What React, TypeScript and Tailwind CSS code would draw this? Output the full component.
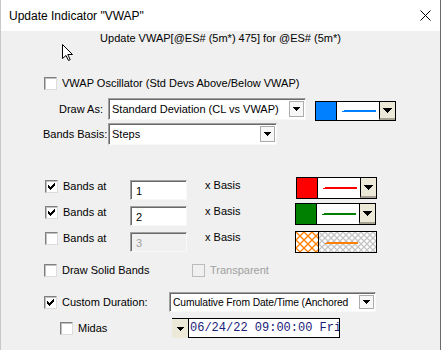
import React from "react";

const Tri = ({ w = 7, h = 4 }: { w?: number; h?: number }) => (
  <svg width={w} height={h} viewBox={`0 0 ${w} ${h}`} shapeRendering="crispEdges">
    <polygon points={`0,0 ${w},0 ${w / 2},${h}`} fill="#000" />
  </svg>
);

const CheckBox = ({ checked = false, disabled = false }: { checked?: boolean; disabled?: boolean }) => (
  <div
    className={
      disabled
        ? "w-[13px] h-[13px] shrink-0 border border-[#bcbcbc] bg-[#f0f0f0]"
        : "w-[13px] h-[13px] shrink-0 border border-t-[#808080] border-l-[#808080] border-b-[#dcdcdc] border-r-[#dcdcdc] bg-white shadow-[inset_1px_1px_0_#c0c0c0] flex items-center justify-center"
    }
  >
    {checked && (
      <svg width="7" height="7" viewBox="0 0 7 7" shapeRendering="crispEdges">
        <path d="M6 0h1v3h-1v1h-1v1h-1v1h-1v1h-1v-1h-1v-1h-1v-3h1v1h1v1h1v-1h1v-1h1z" fill="#000" />
      </svg>
    )}
  </div>
);

const DropBtn = () => (
  <div className="w-[15px] h-full shrink-0 bg-[#f7f7f7] border border-[#acacac] flex items-center justify-center">
    <Tri />
  </div>
);

const Combo = ({ text, className, textClass = "" }: { text: string; className: string; textClass?: string }) => (
  <div
    className={
      "flex items-stretch bg-white border border-t-[#a0a0a0] border-l-[#a0a0a0] border-b-[#f8f8f8] border-r-[#f8f8f8] shadow-[inset_1px_1px_0_#696969] pl-[3px] pr-[1px] py-[2px] " +
      className
    }
  >
    <div className={"flex-1 overflow-hidden whitespace-nowrap leading-[16px] " + textClass}>{text}</div>
    <DropBtn />
  </div>
);

const ColorCombo = ({ color, line, className }: { color: string; line: string; className: string }) => (
  <div className={"flex border border-black bg-white " + className}>
    <div className="w-[22px] h-full border-r border-black" style={{ background: color }} />
    <div className="flex-1 flex items-center pl-[5px] pr-[3px]">
      <svg width="34" height="3" viewBox="0 0 34 3" shapeRendering="crispEdges">
        <rect x="2" y="0" width="32" height="2" fill={line} />
        <rect x="0" y="1" width="2" height="1" fill={line} />
      </svg>
    </div>
    <div className="w-[16px] h-full border-l border-black bg-[#ece9d8] flex items-center justify-center border-b-2 border-b-[#a5a294] pt-[1px]">
      <Tri w={9} h={5} />
    </div>
  </div>
);

const HatchCombo = ({ className }: { className: string }) => (
  <div className={"flex border border-black bg-white " + className}>
    <svg width="22" height="20" className="border-r border-black shrink-0 w-[23px] h-full">
      <defs>
        <pattern id="oh" width="8" height="8" patternUnits="userSpaceOnUse">
          <rect width="8" height="8" fill="#fff" />
          <path d="M0 0L8 8M8 0L0 8" stroke="#ff8000" strokeWidth="1.3" />
        </pattern>
      </defs>
      <rect width="23" height="21" fill="url(#oh)" />
    </svg>
    <div className="flex-1 relative">
      <svg className="absolute inset-0" width="100%" height="100%">
        <defs>
          <pattern id="gh" width="6" height="6" patternUnits="userSpaceOnUse">
            <rect width="6" height="6" fill="#fff" />
            <path d="M0 0L6 6M6 0L0 6" stroke="#c4c4c4" strokeWidth="1.3" />
          </pattern>
        </defs>
        <rect width="100%" height="100%" fill="url(#gh)" />
        <rect x="8" y="10" width="31" height="2" fill="#ff8000" />
        <rect x="6" y="11" width="2" height="1" fill="#ff8000" />
      </svg>
    </div>
  </div>
);

const Sunken = ({ text, disabled = false }: { text: string; disabled?: boolean }) => (
  <div
    className={
      (disabled ? "bg-[#f0f0f0] text-[#a0a0a0] " : "bg-white ") +
      "w-[57px] h-[20px] border border-t-[#a0a0a0] border-l-[#a0a0a0] border-b-[#f8f8f8] border-r-[#f8f8f8] shadow-[inset_1px_1px_0_#696969] pl-[5px] leading-[19px] pt-[1px]"
    }
  >
    {text}
  </div>
);

const BandRow = ({ n, checked, disabled, mt, children }: { n: string; checked: boolean; disabled?: boolean; mt: string; children: React.ReactNode }) => (
  <div className={"h-[22px] flex items-start pl-[44px] " + mt}>
    <CheckBox checked={checked} />
    <span className="ml-[5px] w-[67px] leading-[13px]">Bands at</span>
    <Sunken text={n} disabled={disabled} />
    <span className="ml-[18px] w-[91px] leading-[13px] -mt-[1px]">x Basis</span>
    {children}
  </div>
);

export default function App() {
  return (
    <div
      className="relative w-[441px] h-[350px] bg-[#f0f0f0] border-r border-r-[#6b6b6b] border-l border-l-[#c8c8c8] flex flex-col overflow-hidden text-[11px] text-black"
      style={{ fontFamily: '"Liberation Sans", Arial, sans-serif' }}
    >
      <div className="h-[31px] shrink-0 bg-white flex items-center justify-between pl-[8px] pr-[9px]">
        <span className="text-[12px]">Update Indicator "VWAP"</span>
        <svg width="11" height="11" viewBox="0 0 11 11">
          <path d="M0.5 0.5L10.5 10.5M10.5 0.5L0.5 10.5" stroke="#000" strokeWidth="1" />
        </svg>
      </div>

      <div className="h-[15px] leading-[15px] text-center">Update VWAP[@ES# (5m*) 475] for @ES# (5m*)</div>

      <div className="mt-[31px] h-[13px] flex items-center pl-[43px]">
        <CheckBox />
        <span className="ml-[5px]">VWAP Oscillator (Std Devs Above/Below VWAP)</span>
      </div>

      <div className="mt-[8px] h-[22px] flex items-start pl-[58px]">
        <span className="w-[49px] leading-[22px]">Draw As:</span>
        <Combo text="Standard Deviation (CL vs VWAP)" className="w-[198px] h-[22px]" />
        <ColorCombo color="#0080ff" line="#0080ff" className="ml-[9px] mt-[3px] w-[81px] h-[20px]" />
      </div>

      <div className="mt-[3px] h-[22px] flex items-start pl-[42px]">
        <span className="w-[65px] leading-[22px]">Bands Basis:</span>
        <Combo text="Steps" className="w-[169px] h-[22px]" />
      </div>

      <BandRow n="1" checked mt="mt-[35px]">
        <ColorCombo color="#ff0000" line="#ff0000" className="-mt-[3px] w-[81px] h-[22px]" />
      </BandRow>
      <BandRow n="2" checked mt="mt-[4px]">
        <ColorCombo color="#008000" line="#008000" className="-mt-[3px] -ml-[1px] w-[81px] h-[22px]" />
      </BandRow>
      <BandRow n="3" checked={false} disabled mt="mt-[4px]">
        <HatchCombo className="-mt-[1px] -ml-[1px] w-[82px] h-[22px]" />
      </BandRow>

      <div className="mt-[10px] h-[13px] flex items-center pl-[43px]">
        <CheckBox />
        <span className="ml-[5px] w-[130px]">Draw Solid Bands</span>
        <CheckBox disabled />
        <span className="ml-[5px] text-[#a0a0a0]">Transparent</span>
      </div>

      <div className="mt-[15px] h-[20px] flex items-center pl-[43px]">
        <CheckBox checked />
        <span className="ml-[5px] w-[107px]">Custom Duration:</span>
        <Combo
          text="Cumulative From Date/Time (Anchored"
          className="w-[207px] h-[20px]"
          textClass="text-[10.3px] tracking-[-0.1px]"
        />
      </div>

      <div className="mt-[6px] h-[20px] flex items-start pl-[59px]">
        <div className="mt-[4px]">
          <CheckBox />
        </div>
        <span className="ml-[5px] w-[94px] leading-[20px]">Midas</span>
        <div className="flex h-[20px] border-t border-black">
          <div className="w-[16px] bg-[#ece9d8] flex items-center justify-center">
            <Tri />
          </div>
          <div
            className="w-[152px] bg-white border-l border-r border-b border-black pl-[1px] leading-[19px] text-[12px] text-[#20207a] whitespace-nowrap overflow-hidden"
            style={{ fontFamily: '"Liberation Mono", "Courier New", monospace' }}
          >
            06/24/22 09:00:00 Fri
          </div>
        </div>
      </div>

      <svg className="absolute left-[61px] top-[44px]" width="11" height="18" viewBox="0 0 11 18">
        <path d="M0.5 0.5V14.5L4 11.5L6.5 16.5L8.2 15.7L5.8 10.5H10.5Z" fill="#fff" stroke="#000" strokeWidth="1" strokeLinejoin="miter" />
      </svg>
    </div>
  );
}
